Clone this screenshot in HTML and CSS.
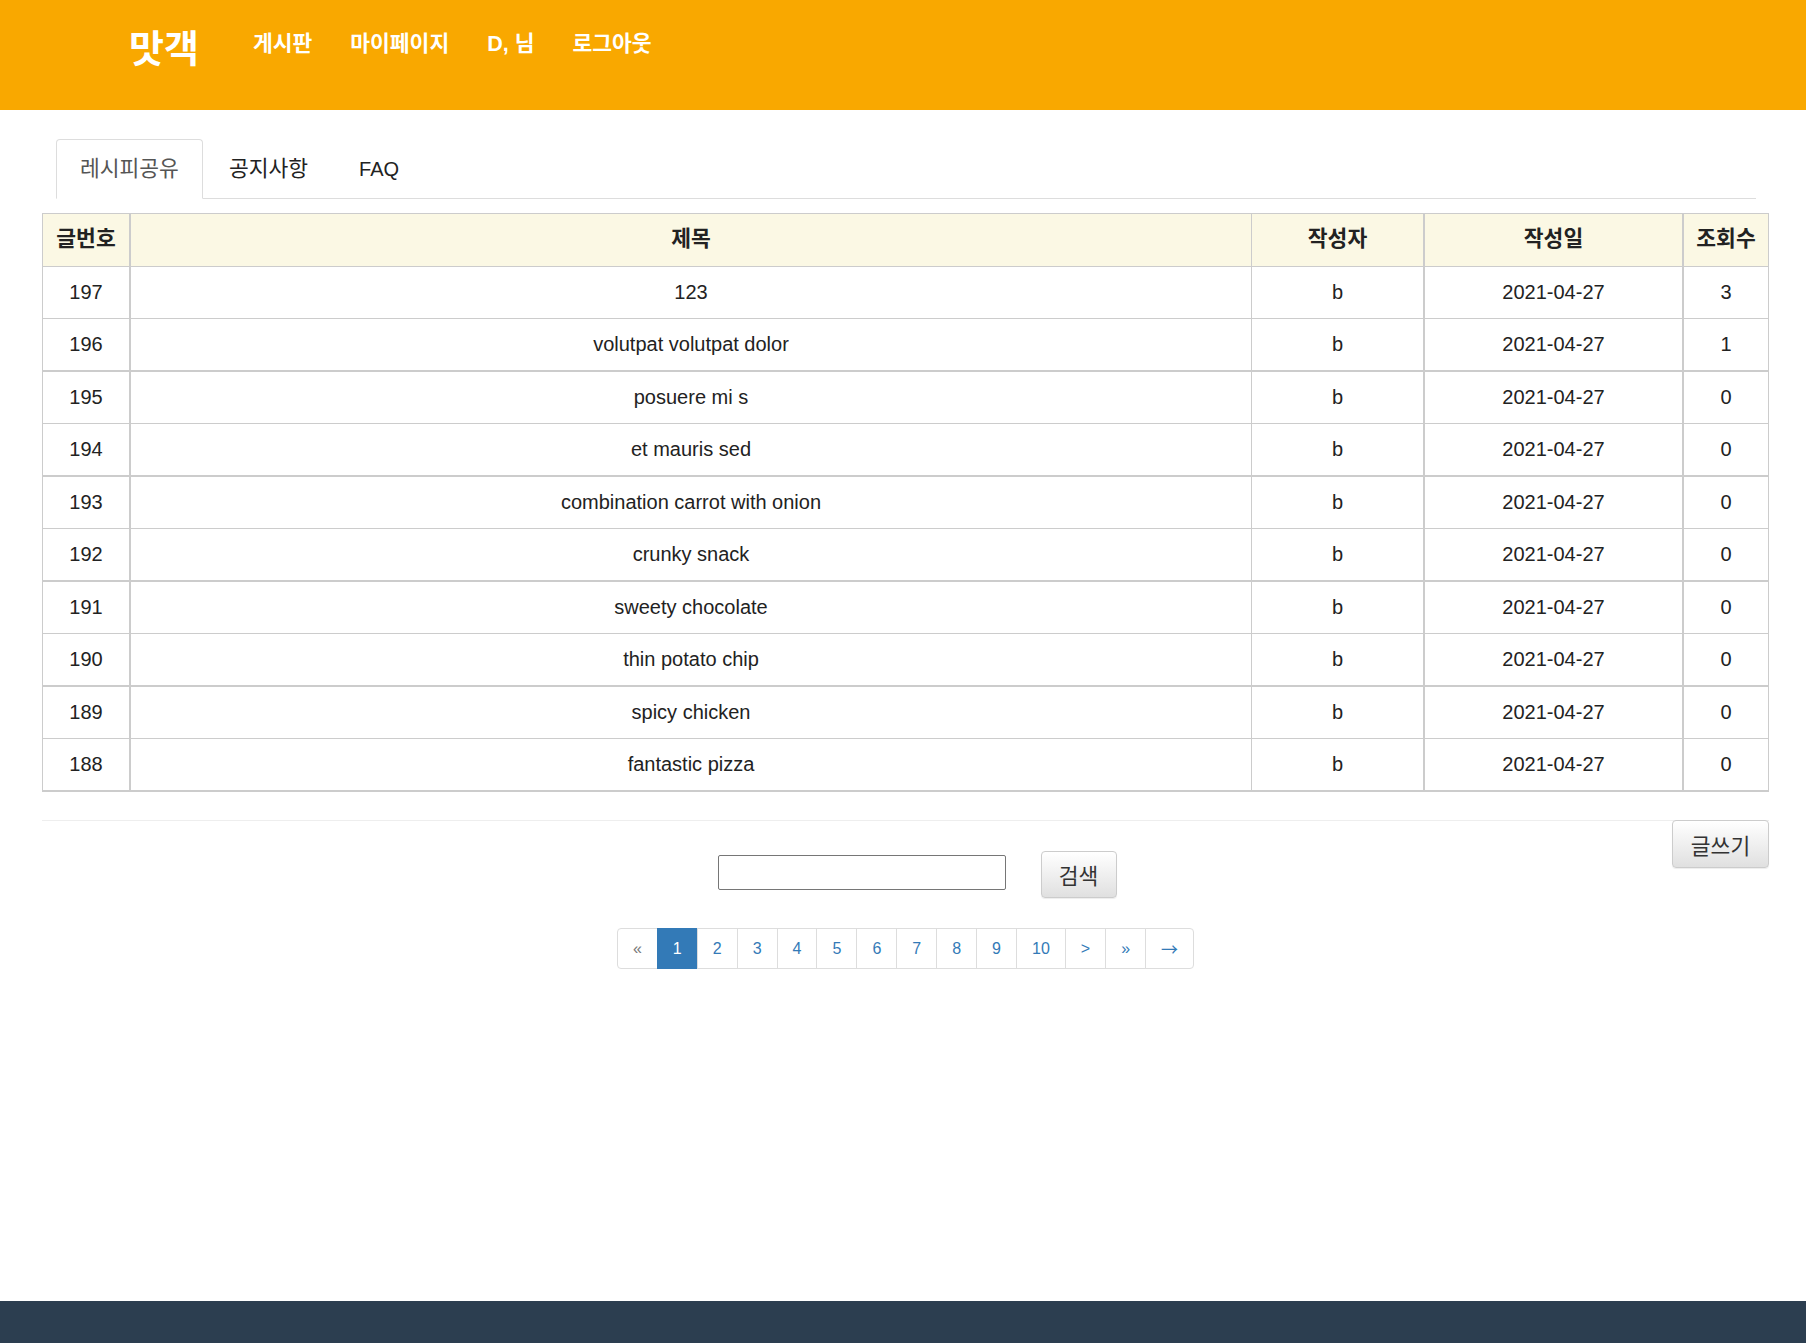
FILE: index.html
```html
<!DOCTYPE html>
<html lang="ko">
<head>
<meta charset="utf-8">
<title>맛객 - 레시피공유</title>
<link rel="stylesheet" href="styles.css">
</head>
<body>
<header class="topbar">
  <a class="logo" href="#">맛객</a>
  <nav class="mainnav">
    <a href="#">게시판</a>
    <a href="#">마이페이지</a>
    <a href="#">D, 님</a>
    <a href="#">로그아웃</a>
  </nav>
</header>

<main class="content">
  <ul class="tabs">
    <li class="tab active"><a href="#">레시피공유</a></li>
    <li class="tab"><a href="#">공지사항</a></li>
    <li class="tab tab-latin"><a href="#">FAQ</a></li>
  </ul>

  <table class="board">
    <colgroup>
      <col class="c-no">
      <col class="c-title">
      <col class="c-writer">
      <col class="c-date">
      <col class="c-views">
    </colgroup>
    <thead>
      <tr><th>글번호</th><th>제목</th><th>작성자</th><th>작성일</th><th>조회수</th></tr>
    </thead>
    <tbody>
      <tr><td>197</td><td>123</td><td>b</td><td>2021-04-27</td><td>3</td></tr>
      <tr><td>196</td><td>volutpat volutpat dolor</td><td>b</td><td>2021-04-27</td><td>1</td></tr>
      <tr><td>195</td><td>posuere mi s</td><td>b</td><td>2021-04-27</td><td>0</td></tr>
      <tr><td>194</td><td>et mauris sed</td><td>b</td><td>2021-04-27</td><td>0</td></tr>
      <tr><td>193</td><td>combination carrot with onion</td><td>b</td><td>2021-04-27</td><td>0</td></tr>
      <tr><td>192</td><td>crunky snack</td><td>b</td><td>2021-04-27</td><td>0</td></tr>
      <tr><td>191</td><td>sweety chocolate</td><td>b</td><td>2021-04-27</td><td>0</td></tr>
      <tr><td>190</td><td>thin potato chip</td><td>b</td><td>2021-04-27</td><td>0</td></tr>
      <tr><td>189</td><td>spicy chicken</td><td>b</td><td>2021-04-27</td><td>0</td></tr>
      <tr><td>188</td><td>fantastic pizza</td><td>b</td><td>2021-04-27</td><td>0</td></tr>
    </tbody>
  </table>

  <div class="toolbar">
    <button class="btn btn-write" type="button">글쓰기</button>
    <form class="search" action="#">
      <input class="search-input" type="text">
      <button class="btn btn-search" type="submit">검색</button>
    </form>
  </div>

  <ul class="pagination">
    <li class="pg disabled"><a href="#">&laquo;</a></li>
    <li class="pg active"><a href="#">1</a></li>
    <li class="pg"><a href="#">2</a></li>
    <li class="pg"><a href="#">3</a></li>
    <li class="pg"><a href="#">4</a></li>
    <li class="pg"><a href="#">5</a></li>
    <li class="pg"><a href="#">6</a></li>
    <li class="pg"><a href="#">7</a></li>
    <li class="pg"><a href="#">8</a></li>
    <li class="pg"><a href="#">9</a></li>
    <li class="pg"><a href="#">10</a></li>
    <li class="pg"><a href="#">&gt;</a></li>
    <li class="pg"><a href="#">&raquo;</a></li>
    <li class="pg pg-arrow"><a href="#">&rarr;</a></li>
  </ul>
</main>

<footer class="footer"></footer>
</body>
</html>
```

FILE: styles.css
```css
* { box-sizing: border-box; }

html, body { margin: 0; padding: 0; }

body {
  font-family: "Liberation Sans", "Noto Sans CJK KR", Arial, sans-serif;
  color: #222;
  background: #fff;
  min-height: 100vh;
  display: flex;
  flex-direction: column;
}

a { text-decoration: none; }

/* ---------- header ---------- */
.topbar {
  height: 110px;
  background: #f9a800;
  display: flex;
  align-items: center;
  padding: 0 0 14px 129px;
}

.logo {
  font-size: 38px;
  font-weight: 700;
  line-height: 44px;
  color: #fff;
  margin-right: 35px;
  margin-top: 2px;
}

.mainnav {
  display: flex;
  margin-bottom: 8px;
}

.mainnav a {
  color: #fff;
  font-weight: 700;
  font-size: 21.5px;
  line-height: 26px;
  padding: 0 19px;
}

/* ---------- content ---------- */
.content {
  padding: 0 37px 0 42px;
}

.tabs {
  list-style: none;
  margin: 29px 13px 14px 14px;
  padding: 0;
  display: flex;
  border-bottom: 1px solid #ddd;
}

.tab {
  margin-right: 2px;
  margin-bottom: -1px;
}

.tab a {
  display: block;
  padding: 17px 23px 17px;
  font-size: 21.5px;
  line-height: 24px;
  color: #222;
  border: 1px solid transparent;
  border-radius: 4px 4px 0 0;
}

.tab-latin a {
  font-size: 20px;
  padding-left: 24px;
}

.tab.active a {
  color: #555;
  background: #fff;
  border-color: #ddd;
  border-bottom-color: #fff;
}

/* ---------- table ---------- */
.board {
  width: 1727px;
  table-layout: fixed;
  border-collapse: separate;
  border-spacing: 0;
  border-top: 1px solid #ccc;
  border-left: 1px solid #ccc;
  font-size: 20px;
}

.c-no { width: 88px; }
.c-title { width: 1121px; }
.c-writer { width: 173px; }
.c-date { width: 259px; }
.c-views { width: 85px; }

.board th,
.board td {
  text-align: center;
  vertical-align: middle;
  padding: 0 2px;
  border-right: 1px solid #ccc;
  border-bottom: 1px solid #ccc;
}

.board th:nth-child(1), .board td:nth-child(1),
.board th:nth-child(3), .board td:nth-child(3),
.board th:nth-child(4), .board td:nth-child(4) {
  border-right-width: 2px;
}

.board th {
  height: 53px;
  background: #fbf8e4;
  color: #222;
  font-weight: 700;
  font-size: 21.5px;
  line-height: 24px;
  padding-bottom: 3px;
}

.board td {
  height: 52px;
  color: #222;
}

.board tbody tr:nth-child(even) td {
  height: 53px;
  border-bottom-width: 2px;
}

/* ---------- toolbar ---------- */
.toolbar {
  margin-top: 28px;
  border-top: 1px solid #eee;
  display: grid;
  grid-template-areas: "stack";
}

.btn {
  font-family: "Liberation Sans", "Noto Sans CJK KR", Arial, sans-serif;
  font-size: 21.5px;
  color: #333;
  background: linear-gradient(to bottom, #ffffff 0%, #e0e0e0 100%);
  border: 1px solid #ccc;
  border-radius: 4px;
  box-shadow: inset 0 1px 0 rgba(255,255,255,.15), 0 1px 1px rgba(0,0,0,.075);
  cursor: pointer;
}

.btn-write {
  grid-area: stack;
  justify-self: end;
  align-self: start;
  margin-top: -1px;
  width: 97px;
  height: 48px;
  padding: 0;
}

.search {
  grid-area: stack;
  justify-self: center;
  align-self: start;
  display: flex;
  align-items: flex-start;
  margin: 30px 0 0 23px;
}

.search-input {
  width: 288px;
  height: 35px;
  margin-top: 4px;
  border: 1px solid #767676;
  border-radius: 2px;
  font-size: 18px;
  padding: 2px 6px;
}

.btn-search {
  width: 76px;
  height: 47px;
  margin-left: 35px;
  padding: 0;
}

/* ---------- pagination ---------- */
.pagination {
  list-style: none;
  display: flex;
  justify-content: center;
  margin: 30px 0 0;
  padding: 0;
}

.pg a {
  display: block;
  padding: 8px 15px;
  font-size: 16px;
  line-height: 23px;
  height: 41px;
  color: #337ab7;
  background: #fff;
  border: 1px solid #ddd;
  margin-left: -1px;
}

.pg-arrow a {
  font-family: "Noto Sans CJK KR", "DejaVu Sans", sans-serif;
  font-size: 17px;
}

.pg:first-child a {
  margin-left: 0;
  border-radius: 4px 0 0 4px;
}

.pg:last-child a {
  border-radius: 0 4px 4px 0;
}

.pg.disabled a {
  color: #777;
}

.pg.active a {
  color: #fff;
  background: #337ab7;
  border-color: #337ab7;
}

/* ---------- footer ---------- */
.footer {
  margin-top: auto;
  height: 42px;
  background: #2c3e50;
}
```
